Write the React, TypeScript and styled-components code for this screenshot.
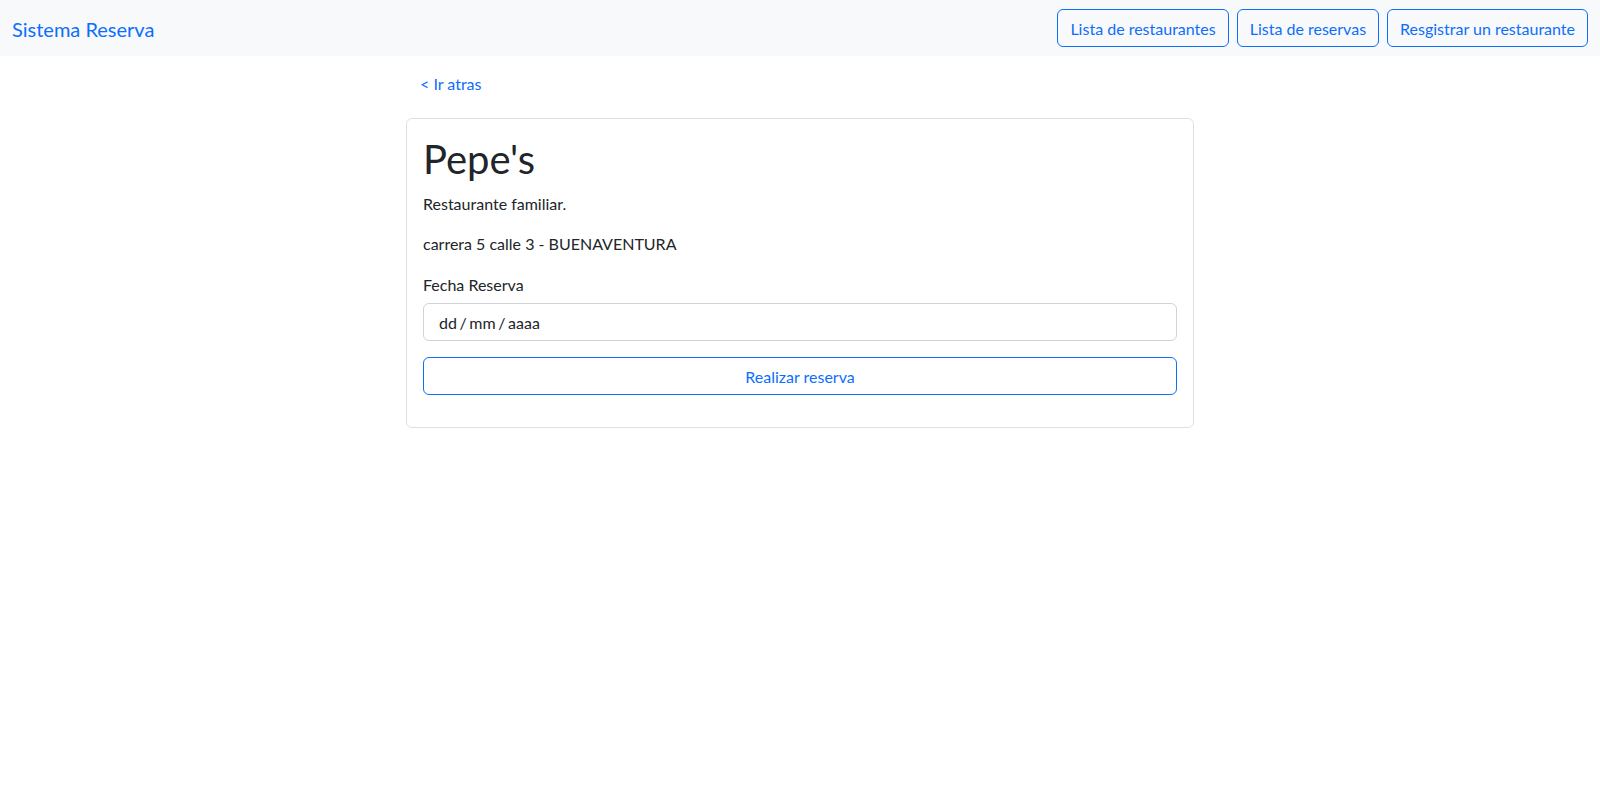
import React from "react";
import styled, { createGlobalStyle } from "styled-components";

const Global = createGlobalStyle`
  * { box-sizing: border-box; }
  body { margin: 0; font-family: Lato, "Noto Sans", sans-serif; font-size: 16px; line-height: 1.5; color: #212529; background: #fff; }
`;

const Nav = styled.nav`
  background: #f8f9fa;
  padding: 8px 12px;
  display: flex;
  align-items: center;
  justify-content: space-between;
`;
const Brand = styled.a`
  font-size: 20px;
  line-height: 30px;
  padding: 6px 0 4px;
  color: #0d6efd;
  text-decoration: none;
`;
const NavButtons = styled.div`
  display: flex;
  gap: 8px;
`;
const OutlineButton = styled.button<{ $block?: boolean }>`
  font: inherit;
  font-size: 16px;
  line-height: 24px;
  padding: 7px 12px 5px;
  color: #0d6efd;
  background: transparent;
  border: 1px solid #0d6efd;
  border-radius: 6px;
  width: ${(p) => (p.$block ? "100%" : "auto")};
  text-align: center;
  cursor: pointer;
`;
const Main = styled.main`
  width: 788px;
  margin: 8px auto 0;
`;
const BackLink = styled.a`
  display: inline-block;
  padding: 8px 12px 6px 14px;
  line-height: 24px;
  color: #0d6efd;
  text-decoration: none;
`;
const Card = styled.section`
  margin-top: 16px;
  border: 1px solid rgba(0, 0, 0, 0.125);
  border-radius: 6px;
  padding: 16px 16px 32px;
`;
const Title = styled.h1`
  margin: 0 0 8px;
  padding-top: 1px;
  font-size: 40px;
  line-height: 47px;
  font-weight: 400;
`;
const Text = styled.p`
  margin: 0 0 15px;
  padding-top: 1px;
`;
const Label = styled.label`
  display: block;
  padding-top: 2px;
  margin-bottom: 6px;
`;
const DateField = styled.input`
  display: block;
  width: 100%;
  font: inherit;
  line-height: 24px;
  padding: 7px 12px 5px 15px;
  word-spacing: -1.5px;
  color: #212529;
  border: 1px solid #ced4da;
  border-radius: 6px;
  margin-bottom: 16px;
  outline: none;
`;

export default function App() {
  return (
    <>
      <Global />
      <Nav>
        <Brand href="#">Sistema Reserva</Brand>
        <NavButtons>
          <OutlineButton>Lista de restaurantes</OutlineButton>
          <OutlineButton>Lista de reservas</OutlineButton>
          <OutlineButton>Resgistrar un restaurante</OutlineButton>
        </NavButtons>
      </Nav>
      <Main>
        <BackLink href="#">&lt; Ir atras</BackLink>
        <Card>
          <Title>Pepe's</Title>
          <Text>Restaurante familiar.</Text>
          <Text>carrera 5 calle 3 - BUENAVENTURA</Text>
          <Label htmlFor="fecha">Fecha Reserva</Label>
          <DateField id="fecha" type="text" readOnly value="dd / mm / aaaa" />
          <OutlineButton $block>Realizar reserva</OutlineButton>
        </Card>
      </Main>
    </>
  );
}
